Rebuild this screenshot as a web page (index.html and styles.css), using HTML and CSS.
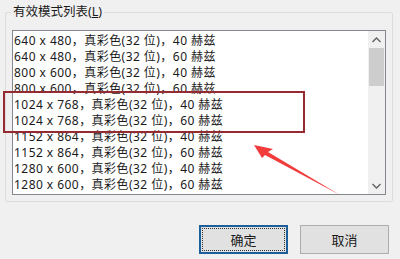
FILE: index.html
```html
<html>
<head>
    <title>有效模式列表</title>
    <link rel="stylesheet" href="styles.css">
</head>
<body>
<main class="dialog">
    <section class="group">
        <div class="group-title">有效模式列表(<u>L</u>)</div>
        <div class="mode-list">
            <ul class="mode-rows">
                <li class="mode-row">640 x 480，真彩色(32 位)，40 赫兹</li>
                <li class="mode-row">640 x 480，真彩色(32 位)，60 赫兹</li>
                <li class="mode-row">800 x 600，真彩色(32 位)，40 赫兹</li>
                <li class="mode-row">800 x 600，真彩色(32 位)，60 赫兹</li>
                <li class="mode-row">1024 x 768，真彩色(32 位)，40 赫兹</li>
                <li class="mode-row">1024 x 768，真彩色(32 位)，60 赫兹</li>
                <li class="mode-row">1152 x 864，真彩色(32 位)，40 赫兹</li>
                <li class="mode-row">1152 x 864，真彩色(32 位)，60 赫兹</li>
                <li class="mode-row">1280 x 600，真彩色(32 位)，40 赫兹</li>
                <li class="mode-row">1280 x 600，真彩色(32 位)，60 赫兹</li>
            </ul>
            <div class="scrollbar">
                <div class="scroll-btn">
                    <svg width="9" height="6" viewBox="0 0 9 6"><path d="M0.5 5 L4.5 1 L8.5 5" fill="none" stroke="#606060" stroke-width="1.3"/></svg>
                </div>
                <div class="scroll-track">
                    <div class="scroll-thumb"></div>
                </div>
                <div class="scroll-btn">
                    <svg width="9" height="6" viewBox="0 0 9 6"><path d="M0.5 1 L4.5 5 L8.5 1" fill="none" stroke="#606060" stroke-width="1.3"/></svg>
                </div>
            </div>
        </div>
    </section>
    <div class="buttons">
        <button class="btn btn-default">确定</button>
        <button class="btn">取消</button>
    </div>
</main>

<div class="mark-box"></div>
<svg class="mark-arrow" width="400" height="259" viewBox="0 0 400 259">
    <polygon points="254,145 273,149 268,152 340,195 265,155 262,158" fill="#f23b3b"/>
</svg>
</body>
</html>
```

FILE: styles.css
```css
body {
    margin: 0;
    background: #f0f0f0;
    font-family: "Noto Sans", "Noto Sans CJK SC", sans-serif;
    font-size: 12px;
    color: #1a1a1a;
}

.dialog {
    padding: 12px 7px 0 5px;
}

.group {
    height: 188px;
    border: 1px solid #dcdcdc;
    border-radius: 2px;
}

.group-title {
    display: inline-block;
    margin: -9px 0 0 5px;
    padding: 0 2px;
    line-height: 16px;
    font-size: 12.5px;
    background: #f0f0f0;
    vertical-align: top;
}

.mode-list {
    display: flex;
    margin: 10px 0 0 6px;
    width: 372px;
    height: 163px;
    border: 1px solid #828790;
    background: #fff;
    overflow: hidden;
}

.mode-rows {
    flex: 1;
    margin: 0;
    padding: 2px 0 0 1px;
    list-style: none;
    font-size: 12px;
    letter-spacing: 0.45px;
}

.mode-row {
    line-height: 16px;
    white-space: nowrap;
}

.scrollbar {
    width: 17px;
    display: flex;
    flex-direction: column;
    background: #f0f0f0;
}

.scroll-btn {
    height: 17px;
    display: flex;
    align-items: center;
    justify-content: center;
}

.scroll-track {
    flex: 1;
}

.scroll-thumb {
    margin: 0 1px;
    height: 38px;
    background: #cdcdcd;
}

.buttons {
    display: flex;
    justify-content: flex-end;
    gap: 12px;
    margin-top: 23px;
    padding-right: 4px;
}

.btn {
    position: relative;
    width: 89px;
    height: 29px;
    border: 1px solid #adadad;
    background: #e1e1e1;
    font-family: "Noto Sans CJK SC", sans-serif;
    font-size: 13px;
    color: #1a1a1a;
    padding: 0;
}

.btn-default {
    border: 2px solid #1c5f99;
}

.btn-default::after {
    content: "";
    position: absolute;
    top: 1px;
    left: 1px;
    right: 1px;
    bottom: 1px;
    border: 1px dotted #333;
}

.mark-box {
    position: absolute;
    left: 3px;
    top: 91px;
    width: 298px;
    height: 38px;
    border: 2px solid #962a33;
}

.mark-arrow {
    position: absolute;
    left: 0;
    top: 0;
}
```
